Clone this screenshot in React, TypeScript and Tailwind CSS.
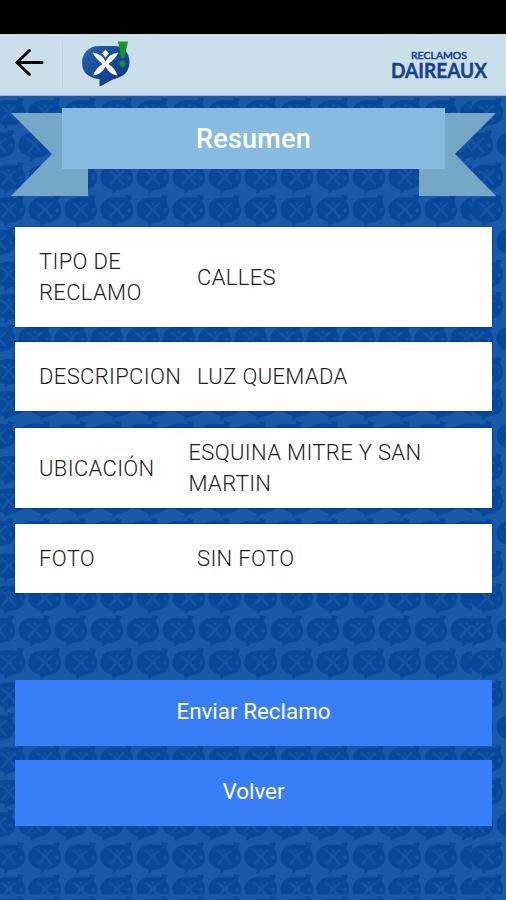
import type { ReactNode } from 'react';

const ROWS = Array.from({ length: 25 }, (_, i) => ({ y: 112.6 + i * 32.36, shifted: i % 3 === 1 }));
const COLS = Array.from({ length: 14 }, (_, i) => i);

function Backdrop() {
  return (
    <svg className="absolute inset-0 h-full w-full" viewBox="0 0 506 900" aria-hidden="true">
      <defs>
        <g id="mark">
          <path
            d="M-16.5 0C-16.5-9-9-12.500-1-12.500L8-12L9-12.500L8.500-15L15-14L13-8.500C17.500-3 17 5 12 9.500C8 12 3 12.500 0 13L-4 16.500L-5 12C-12 10.500-16.500 6-16.500 0Z"
            fill="#07489b"
          />
          <g fill="none" stroke="#1454a2" strokeWidth="2.600">
            <path d="M-8.500-6.500Q-3-4.500-.8 0Q-3 4-7.500 7.500M7.500-6.500Q2.500-4.500 .4 0Q3 4 7 7.500" />
          </g>
          <path d="M0-8.500L2-6.500L0-4.500L-2-6.500ZM12-2L14.500 .5L12 3L9.500 .5Z" fill="#1454a2" />
        </g>
        <clipPath id="mainTile">
          <rect x="0" y="96" width="472" height="798.500" />
        </clipPath>
        <clipPath id="sideTile">
          <rect x="472" y="96" width="34" height="798.500" />
        </clipPath>
      </defs>
      <rect width="506" height="900" fill="#1859a8" />
      <g clipPath="url(#mainTile)">
        {ROWS.map((r) =>
          COLS.map((c) => <use key={`${r.y}-${c}`} href="#mark" x={(r.shifted ? -1 : 9) + c * 36} y={r.y} />),
        )}
      </g>
      <g clipPath="url(#sideTile)">
        {ROWS.map((r) =>
          [0, 1].map((c) => <use key={`${r.y}-${c}`} href="#mark" x={(r.shifted ? 477 : 487) + c * 36} y={r.y} />),
        )}
      </g>
      {COLS.map((c) => (
        <use key={c} href="#mark" x={9 + c * 36} y={911} />
      ))}
    </svg>
  );
}

function Header() {
  return (
    <header className="relative flex h-[62px] items-center border-b border-[#9db9cf] bg-[#cbdfea]">
      <svg className="mb-[3px] ml-[14px] h-[30px] w-[30px]" viewBox="0 0 30 30" fill="none" stroke="#050505" strokeWidth="3" strokeLinecap="round">
        <path d="M28 14.500H3M15.500 2.500L3 14.500L15.500 26.500" />
      </svg>
      <div className="ml-[18px] h-[48px] w-px bg-[#c9d3dd]" />
      <svg className="ml-[18px] h-[50px] w-[52px]" viewBox="0 0 52 50">
        <defs>
          <linearGradient id="bubble" x1="0" y1="0" x2="1" y2="1">
            <stop offset="0" stopColor="#2c62ad" />
            <stop offset=".55" stopColor="#15479a" />
            <stop offset="1" stopColor="#0c3583" />
          </linearGradient>
        </defs>
        <path
          d="M18 6H33C43 6 48.500 13 48.500 22C48.500 31 43 36.500 35 38.500C29 40 25 44 18.500 46.500V39C7 38 1 32 1 23C1 13 8 6 18 6Z"
          fill="url(#bubble)"
        />
        <path
          d="M11.500 12.500Q21 13.500 24.500 21.500Q28 13.500 37.500 12.500Q34 19 27.500 24Q34 28 36.500 35.500Q28 34 24.500 26.500Q21 34 12 35.500Q15 28 21.500 24Q15 19 11.500 12.500Z"
          fill="#fff"
        />
        <path d="M24.500 9.500L28 13.500L24.500 17.500L21 13.500Z" fill="#fff" />
        <path d="M37 1.500H47L43.500 18H40Z" fill="#12962c" />
        <path d="M41.500 20L45.500 24L41.500 28L37.500 24Z" fill="#12962c" />
      </svg>
      <svg className="ml-auto h-[40px] w-[104px] overflow-visible" viewBox="0 0 104 40" fill="#17418f" stroke="#17418f" fontFamily="Lato, sans-serif">
        <text x="24" y="13.500" fontSize="10" fontWeight="400" strokeWidth=".5" textLength="56" lengthAdjust="spacingAndGlyphs">
          RECLAMOS
        </text>
        <text x="4" y="33" fontSize="20" fontWeight="700" strokeWidth=".4" textLength="96" lengthAdjust="spacingAndGlyphs">
          DAIREAUX
        </text>
      </svg>
      <div className="w-[15px]" />
    </header>
  );
}

function Ribbon() {
  return (
    <div className="relative ml-[11px] mt-[12px] h-[88px] w-[485px]">
      <svg className="absolute inset-0" width="485" height="88" viewBox="0 0 485 88" fill="#75a7c7">
        <path d="M0 5H77V88H0L41 46Z" />
        <path d="M485 5H408V88H485L444 46Z" />
      </svg>
      <h1 className="relative mx-[51px] flex h-[61px] items-center justify-center bg-[#87bbdf] pt-px text-[27px] font-medium tracking-[0.2px] text-white">
        Resumen
      </h1>
    </div>
  );
}

type CardProps = { label: ReactNode; size: string; labelWidth: string; children: ReactNode };

function Card({ label, size, labelWidth, children }: CardProps) {
  return (
    <div className={`flex items-center bg-white pl-[24px] text-[22px] leading-[31px] tracking-[0.35px] text-[#1c1c1c] shadow-[0_0_2px_#002c94] ${size}`}>
      <div className={`shrink-0 ${labelWidth}`}>{label}</div>
      <div>{children}</div>
    </div>
  );
}

export default function App() {
  return (
    <div className="relative h-[900px] w-[506px] overflow-hidden font-['Roboto',sans-serif]">
      <Backdrop />
      <div className="relative">
        <div className="h-[34px] bg-black" />
        <Header />
        <Ribbon />
        <main className="mx-[14px] mt-[31px] flex flex-col pl-px pr-0 font-light">
          <Card size="h-[100px]" labelWidth="w-[158px]" label={<>TIPO DE<br />RECLAMO</>}>
            CALLES
          </Card>
          <Card size="mt-[15px] h-[69px]" labelWidth="w-[158px]" label="DESCRIPCION">
            LUZ QUEMADA
          </Card>
          <Card size="mt-[17px] h-[80px]" labelWidth="w-[149.5px]" label="UBICACIÓN">
            ESQUINA MITRE Y SAN<br />MARTIN
          </Card>
          <Card size="mt-[15.5px] h-[69px]" labelWidth="w-[158px]" label="FOTO">
            SIN FOTO
          </Card>
          <button className="mt-[87px] h-[66px] bg-[#387ef7] pb-[2px] text-[22.4px] font-normal text-white">Enviar Reclamo</button>
          <button className="mt-[14px] h-[66px] bg-[#387ef7] pb-[2px] text-[22.4px] font-normal text-white">Volver</button>
        </main>
      </div>
    </div>
  );
}
